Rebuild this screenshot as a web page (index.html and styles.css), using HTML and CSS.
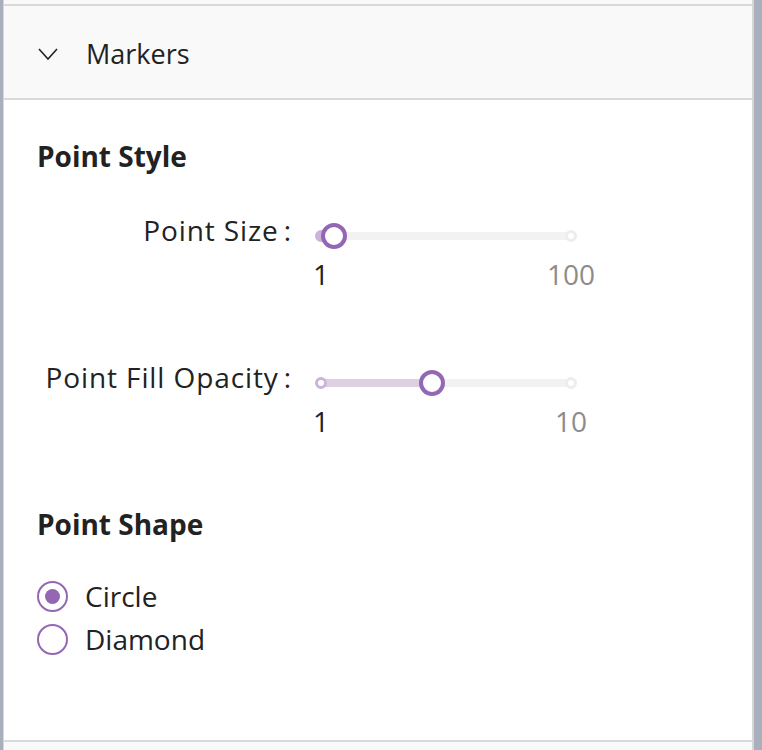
FILE: index.html
```html
<!DOCTYPE html>
<html lang="en">
<head>
  <meta charset="UTF-8" />
  <meta name="viewport" content="width=device-width, initial-scale=1.0" />
  <title>Markers</title>
  <link rel="stylesheet" href="styles.css">
</head>
<body>
  <div class="panel">
    <div class="prev"></div>
    <div class="section-head">
      <svg class="chevron" width="20" height="12" viewBox="0 0 20 12">
        <path d="M1 1 L10 11 L19 1" fill="none" stroke="#222" stroke-width="1.6" />
      </svg>
      <span>Markers</span>
    </div>

    <div class="section-body">
      <h2>Point Style</h2>

      <div class="field first">
        <label>Point Size<span class="colon">:</span></label>
        <div class="slider">
          <div class="track">
            <div class="fill" style="width: 0%"></div>
            <span class="dot start"></span>
            <span class="dot end"></span>
            <span class="thumb" style="left: 5%"></span>
          </div>
          <div class="marks">
            <span class="min">1</span>
            <span class="max">100</span>
          </div>
        </div>
      </div>

      <div class="field">
        <label>Point Fill Opacity<span class="colon">:</span></label>
        <div class="slider">
          <div class="track">
            <div class="fill" style="width: 44.4%"></div>
            <span class="dot start on"></span>
            <span class="dot end"></span>
            <span class="thumb" style="left: 44.4%"></span>
          </div>
          <div class="marks">
            <span class="min">1</span>
            <span class="max">10</span>
          </div>
        </div>
      </div>

      <h2 class="shape-title">Point Shape</h2>
      <div class="radios">
        <label class="radio"><span class="ring checked"></span>Circle</label>
        <label class="radio"><span class="ring"></span>Diamond</label>
      </div>
    </div>

    <div class="next"></div>
  </div>
</body>
</html>
```

FILE: styles.css
```css
* {
  box-sizing: border-box;
  font-family: 'Open Sans', 'Lato', sans-serif;
}
body {
  margin: 0;
  background: #a9afbd;
  height: 750px;
  overflow: hidden;
}
.panel {
  margin: 0 8px 0 3px;
  height: 750px;
  background: #fff;
  border-left: 1px solid #d6d6d6;
  border-right: 2px solid #d6d6d6;
  display: flex;
  flex-direction: column;
}
.prev {
  background: #f9f9f9;
  border-bottom: 2px solid #d9d9d9;
  height: 6px;
}
.section-head {
  height: 94px;
  background: #f9f9f9;
  border-bottom: 2px solid #d9d9d9;
  display: flex;
  align-items: center;
  padding-left: 34px;
  padding-top: 2px;
  font-size: 27px;
  color: #222;
}
.chevron {
  margin-right: 28px;
  margin-top: 1px;
}
.section-body {
  flex: 1;
  padding: 36px 33px 0;
  color: #222;
}
h2 {
  margin: 0;
  font-size: 28px;
  font-weight: 700;
  line-height: 40px;
}
.field {
  display: grid;
  grid-template-columns: 255px 1fr;
  column-gap: 16px;
  margin-top: 38px;
}
.field + .field {
  margin-top: 70px;
}
.field label {
  text-align: right;
  font-size: 28px;
  line-height: 34px;
  margin-top: -1px;
  letter-spacing: 0.9px;
}
.colon {
  margin-left: 5px;
}
.slider {
  width: 276px;
  padding: 0 13px;
}
.track {
  position: relative;
  height: 8px;
  margin-top: 18px;
  background: #f2f2f2;
  border-radius: 4px;
}
.fill {
  height: 8px;
  background: #dcd0e2;
  border-radius: 4px;
}
.dot {
  position: absolute;
  top: -2px;
  width: 12px;
  height: 12px;
  margin-left: -6px;
  border-radius: 50%;
  background: #fff;
  border: 3px solid #ededed;
}
.dot.start {
  left: 0;
  background: #c9b5dc;
  border-color: #c9b5dc;
}
.dot.start.on {
  background: #fff;
}
.dot.end {
  left: 100%;
}
.thumb {
  position: absolute;
  top: -9px;
  width: 26px;
  height: 26px;
  margin-left: -13px;
  border-radius: 50%;
  background: #fff;
  border: 4px solid #9467b5;
}
.marks {
  position: relative;
  height: 34px;
  margin-top: 17px;
  font-size: 28px;
  line-height: 34px;
}
.marks span {
  position: absolute;
  top: 0;
  transform: translateX(-50%);
}
.marks .min {
  left: 0;
}
.marks .max {
  left: 100%;
  color: #8c8c8c;
}
.shape-title {
  margin-top: 66px;
}
.radios {
  margin-top: 35px;
  display: flex;
  flex-direction: column;
  gap: 9px;
}
.radio {
  display: flex;
  align-items: center;
  font-size: 28px;
  line-height: 34px;
}
.ring {
  width: 31px;
  height: 31px;
  border-radius: 50%;
  border: 2px solid #9467b5;
  margin-right: 17px;
  display: flex;
  align-items: center;
  justify-content: center;
}
.ring.checked::after {
  content: "";
  width: 15px;
  height: 15px;
  border-radius: 50%;
  background: #9467b5;
}
.next {
  height: 10px;
  background: #f9f9f9;
  border-top: 2px solid #d9d9d9;
}
```
